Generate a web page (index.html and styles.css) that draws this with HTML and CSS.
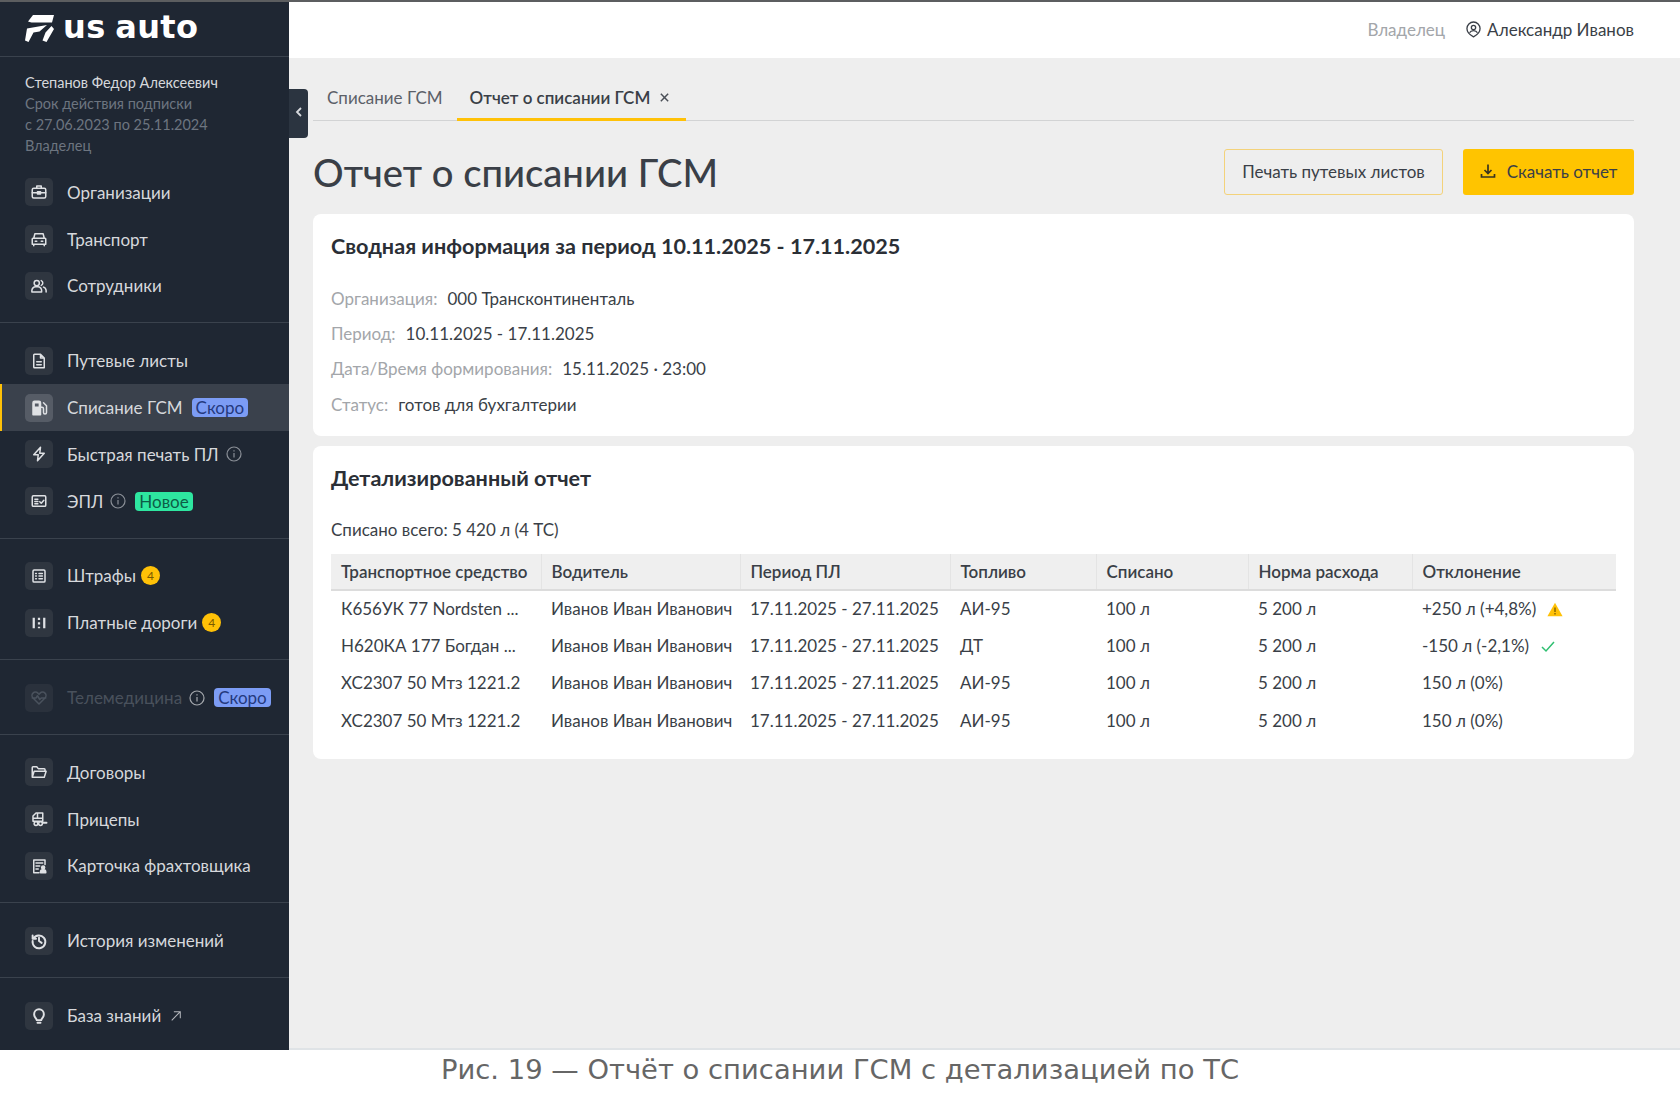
FILE: index.html
```html
<!DOCTYPE html>
<html lang="ru">
<head>
  <meta charset="UTF-8">
  <title>Отчет о списании ГСМ</title>
  <link rel="stylesheet" href="styles.css">
</head>
<body>
  <div class="app">
    <aside class="sidebar">
      <div class="logo">
        <svg class="logo-mark" viewBox="0 0 29 27"><path d="M8 0H29L27 7.500H6.500L3 6.500ZM2 13.500L22 10 14.500 16.500 8.500 17.500 3.500 27 0 25.500ZM26.500 11L29 14 21.500 27 17.500 25.500 20.500 17.500Z" fill="#fff"/></svg>
        <span class="logo-text">us auto</span>
      </div>

      <div class="user-info">
        <div class="user-name">Степанов Федор Алексеевич</div>
        <div>Срок действия подписки</div>
        <div>с 27.06.2023 по 25.11.2024</div>
        <div>Владелец</div>
      </div>

      <div class="nav-group first">
        <div class="nav-item">
          <span class="nav-icon"><svg viewBox="0 0 24 24"><rect x="3" y="7" width="18" height="13" rx="2"/><path d="M9 7V4h6v3M3 13h18"/><rect x="10" y="11.500" width="4" height="3" fill="currentColor"/></svg></span>
          <span>Организации</span>
        </div>
        <div class="nav-item">
          <span class="nav-icon"><svg viewBox="0 0 24 24"><path d="M5 11l1.500-6h11l1.500 6M3 12a1 1 0 011-1h16a1 1 0 011 1v7H3zM5 19v2M19 19v2M7 15h2M15 15h2"/></svg></span>
          <span>Транспорт</span>
        </div>
        <div class="nav-item">
          <span class="nav-icon"><svg viewBox="0 0 24 24"><circle cx="9" cy="8" r="3.500"/><path d="M2.500 20v-2a5 5 0 015-5h3a5 5 0 015 5v2zM15 4.800a3.500 3.500 0 010 6.400M18 13.500a5 5 0 013.500 4.500v2"/></svg></span>
          <span>Сотрудники</span>
        </div>
      </div>

      <div class="nav-group">
        <div class="nav-item">
          <span class="nav-icon"><svg viewBox="0 0 24 24"><path d="M6 3h8l5 5v13H6a1 1 0 01-1-1V4a1 1 0 011-1zM14 3v5h5M9 13h6M9 17h6"/></svg></span>
          <span>Путевые листы</span>
        </div>
        <div class="nav-item active">
          <span class="nav-icon"><svg viewBox="0 0 24 24"><path d="M4 21V5a2 2 0 012-2h6a2 2 0 012 2v16z" fill="currentColor"/><path d="M14 11h2a2 2 0 012 2v5a2 2 0 004 0V9l-4-4"/><rect x="6.500" y="6" width="5" height="4" fill="#565c66" stroke="none"/></svg></span>
          <span>Списание ГСМ</span>
          <span class="badge badge-blue">Скоро</span>
        </div>
        <div class="nav-item">
          <span class="nav-icon"><svg viewBox="0 0 24 24"><path d="M14 3L5 13h6l-1 8 9-10h-6z"/></svg></span>
          <span>Быстрая печать ПЛ</span>
          <svg class="info" viewBox="0 0 16 16"><circle cx="8" cy="8" r="7"/><path d="M8 7v4.500M8 4.200v1.200"/></svg>
        </div>
        <div class="nav-item">
          <span class="nav-icon"><svg viewBox="0 0 24 24"><rect x="3" y="5" width="18" height="14" rx="1.500"/><path d="M6.500 9.500h4M6.500 12.500h4M6.500 15.500h4M13 13l2 2 3.500-4"/></svg></span>
          <span>ЭПЛ</span>
          <svg class="info" viewBox="0 0 16 16"><circle cx="8" cy="8" r="7"/><path d="M8 7v4.500M8 4.200v1.200"/></svg>
          <span class="badge badge-green">Новое</span>
        </div>
      </div>

      <div class="nav-group">
        <div class="nav-item">
          <span class="nav-icon"><svg viewBox="0 0 24 24"><rect x="4" y="4" width="16" height="16" rx="1.500"/><path d="M7.500 8.500h1M7.500 12h1M7.500 15.500h1M12 8.500h4.500M12 12h4.500M12 15.500h4.500"/></svg></span>
          <span>Штрафы</span>
          <span class="count">4</span>
        </div>
        <div class="nav-item">
          <span class="nav-icon"><svg viewBox="0 0 24 24"><path class="bars" d="M5 5v14M19 5v14M12 5v3M12 11v3M12 17v2"/></svg></span>
          <span>Платные дороги</span>
          <span class="count">4</span>
        </div>
      </div>

      <div class="nav-group">
        <div class="nav-item disabled">
          <span class="nav-icon"><svg viewBox="0 0 24 24"><path d="M12 20l-8-8a4.600 4.600 0 010-6.500 4.600 4.600 0 016.500 0L12 7l1.500-1.500a4.600 4.600 0 016.500 0 4.600 4.600 0 010 6.500zM3 12h5l2-3 3 5 2-2h6"/></svg></span>
          <span>Телемедицина</span>
          <svg class="info" viewBox="0 0 16 16"><circle cx="8" cy="8" r="7"/><path d="M8 7v4.500M8 4.200v1.200"/></svg>
          <span class="badge badge-blue">Скоро</span>
        </div>
      </div>

      <div class="nav-group">
        <div class="nav-item">
          <span class="nav-icon"><svg viewBox="0 0 24 24"><path d="M3 19V6a1 1 0 011-1h5l2 2.500h8a1 1 0 011 1V11M3 19l2.500-8H21.500L19 19z"/></svg></span>
          <span>Договоры</span>
        </div>
        <div class="nav-item">
          <span class="nav-icon"><svg viewBox="0 0 24 24"><path d="M8 4h9v11H4V8zM4 11h13M10 4v7"/><circle cx="8" cy="18" r="2.500"/><circle cx="14" cy="18" r="2.500"/><path d="M17 17h5" class="thick"/></svg></span>
          <span>Прицепы</span>
        </div>
        <div class="nav-item">
          <span class="nav-icon"><svg viewBox="0 0 24 24"><path d="M20 10V4H5v17h7M8 8h9M8 12h5M8 16h3"/><circle cx="17.500" cy="14" r="2" fill="currentColor"/><path d="M14 21v-1a3 3 0 013-3h1a3 3 0 013 3v1z" fill="currentColor"/></svg></span>
          <span>Карточка фрахтовщика</span>
        </div>
      </div>

      <div class="nav-group">
        <div class="nav-item">
          <span class="nav-icon"><svg viewBox="0 0 24 24"><path class="thick" d="M4.500 9A8.500 8.500 0 113.500 12M3.500 4.500V9H8M12 7.500V12l3.500 2.500"/></svg></span>
          <span>История изменений</span>
        </div>
      </div>

      <div class="nav-group">
        <div class="nav-item">
          <span class="nav-icon"><svg viewBox="0 0 24 24"><path class="thick" d="M9 17.500c0-2-3.500-3.500-3.500-8a6.500 6.500 0 0113 0c0 4.500-3.500 6-3.500 8zM10 21h4"/></svg></span>
          <span>База знаний</span>
          <svg class="ext" viewBox="0 0 14 14"><path d="M2 12L12 2M4.500 2H12v7.500"/></svg>
        </div>
      </div>
    </aside>

    <div class="main">
      <button class="collapse" type="button"><svg viewBox="0 0 10 14"><path d="M7 3L3 7l4 4"/></svg></button>

      <header class="topbar">
        <span class="role">Владелец</span>
        <svg class="user-icon" viewBox="0 0 16 18"><path d="M8 16.800C4 14.800 1 12 1 8a7 7 0 0114 0c0 4-3 6.800-7 8.800z"/><circle cx="8" cy="6.800" r="2.300"/><path d="M3.800 12.500c.8-1.600 2.400-2.300 4.200-2.300s3.400.7 4.200 2.300"/></svg>
        <span class="user">Александр Иванов</span>
      </header>

      <div class="content">
        <div class="tabs">
          <div class="tab">Списание ГСМ</div>
          <div class="tab active">Отчет о списании ГСМ<svg class="tab-close" viewBox="0 0 12 12"><path d="M2 2l8 8M10 2l-8 8"/></svg></div>
        </div>

        <div class="page-head">
          <h1 class="page-title">Отчет о списании ГСМ</h1>
          <div class="actions">
            <button class="button button-outline" type="button">Печать путевых листов</button>
            <button class="button button-primary" type="button">
              <svg viewBox="0 0 16 16"><path d="M8 1.500v8.500M4.500 7L8 10.500 11.500 7M1.500 11v3h13v-3"/></svg>
              Скачать отчет
            </button>
          </div>
        </div>

        <section class="card summary">
          <h2 class="card-title">Сводная информация за период 10.11.2025 - 17.11.2025</h2>
          <div class="info-rows">
            <div class="info-row"><span class="info-label">Организация:</span><span>000 Трансконтиненталь</span></div>
            <div class="info-row"><span class="info-label">Период:</span><span>10.11.2025 - 17.11.2025</span></div>
            <div class="info-row"><span class="info-label">Дата/Время формирования:</span><span>15.11.2025 · 23:00</span></div>
            <div class="info-row"><span class="info-label">Статус:</span><span>готов для бухгалтерии</span></div>
          </div>
        </section>

        <section class="card detail">
          <h2 class="card-title">Детализированный отчет</h2>
          <div class="total">Списано всего: 5 420 л (4 ТС)</div>
          <table class="report">
            <colgroup>
              <col class="col-vehicle"><col class="col-driver"><col class="col-period"><col class="col-fuel"><col class="col-spent"><col class="col-norm"><col class="col-diff">
            </colgroup>
            <thead>
              <tr><th>Транспортное средство</th><th>Водитель</th><th>Период ПЛ</th><th>Топливо</th><th>Списано</th><th>Норма расхода</th><th>Отклонение</th></tr>
            </thead>
            <tbody>
              <tr>
                <td>К656УК 77 Nordsten ...</td><td>Иванов Иван Иванович</td><td>17.11.2025 - 27.11.2025</td><td>АИ-95</td><td>100 л</td><td>5 200 л</td>
                <td>+250 л (+4,8%)<svg class="mark" viewBox="0 0 16 15"><path d="M8 .8L15.600 14.200H.4z" fill="#ffc107"/><path d="M8 5.500v4.500M8 11v1.500" stroke="#7a5a00" stroke-width="1.300" fill="none"/></svg></td>
              </tr>
              <tr>
                <td>Н620КА 177 Богдан ...</td><td>Иванов Иван Иванович</td><td>17.11.2025 - 27.11.2025</td><td>ДТ</td><td>100 л</td><td>5 200 л</td>
                <td>-150 л (-2,1%)<svg class="mark" viewBox="0 0 16 15"><path d="M2 8l4 4 8-9" stroke="#2fbf71" stroke-width="1.500" fill="none"/></svg></td>
              </tr>
              <tr>
                <td>ХС2307 50 Мтз 1221.2</td><td>Иванов Иван Иванович</td><td>17.11.2025 - 27.11.2025</td><td>АИ-95</td><td>100 л</td><td>5 200 л</td><td>150 л (0%)</td>
              </tr>
              <tr>
                <td>ХС2307 50 Мтз 1221.2</td><td>Иванов Иван Иванович</td><td>17.11.2025 - 27.11.2025</td><td>АИ-95</td><td>100 л</td><td>5 200 л</td><td>150 л (0%)</td>
              </tr>
            </tbody>
          </table>
        </section>
      </div>
    </div>
  </div>

  <div class="caption">Рис. 19 — Отчёт о списании ГСМ с детализацией по ТС</div>
</body>
</html>
```

FILE: styles.css
```css
:root {
  --side-bg: #1f2733;
  --side-line: #3a424d;
  --side-text: #d6d8dc;
  --side-muted: #6d7580;
  --tile: #2f3640;
  --yellow: #ffc107;
  --bg: #eeeeee;
  --text: #3a3f47;
  --muted: #a3a6aa;
}

* {
  box-sizing: border-box;
}

body {
  margin: 0;
  background-color: #fff;
  font-family: Lato, "Noto Sans", sans-serif;
  font-size: 17px;
  color: var(--text);
}

.app {
  display: flex;
  height: 1050px;
  border-top: 2px solid #5c5e60;
}

/* sidebar */
.sidebar {
  width: 289px;
  flex-shrink: 0;
  background-color: var(--side-bg);
  color: var(--side-text);
}

.logo {
  display: flex;
  align-items: center;
  gap: 9px;
  height: 55px;
  padding-left: 25px;
  border-bottom: 1px solid var(--side-line);
}

.logo-mark {
  width: 29px;
  height: 27px;
  margin-top: -1px;
}

.logo-text {
  font-family: "DejaVu Sans", sans-serif;
  font-weight: 700;
  font-size: 32px;
  line-height: 1;
  letter-spacing: 0.4px;
  word-spacing: -2px;
  color: #fff;
  margin-top: -5px;
}

.user-info {
  padding: 15px 25px 13px;
  font-size: 14.5px;
  line-height: 21px;
  color: var(--side-muted);
}

.user-name {
  color: var(--side-text);
}

.nav-group {
  padding: 14px 0 13px;
  border-top: 1px solid var(--side-line);
}

.nav-group.first {
  padding-top: 0;
  border-top: none;
}

.nav-item {
  display: flex;
  align-items: center;
  height: 46.8px;
  padding-left: 25px;
  white-space: nowrap;
}

.nav-item > span:nth-child(2) {
  margin-left: 14px;
}

.nav-item.active {
  background-color: #3a414c;
  box-shadow: inset 2px 0 0 var(--yellow);
}

.nav-item.active .nav-icon {
  background-color: #565c66;
}

.nav-item.disabled {
  color: #49515c;
}

.nav-icon {
  display: flex;
  align-items: center;
  justify-content: center;
  width: 28px;
  height: 28px;
  flex-shrink: 0;
  border-radius: 5px;
  background-color: var(--tile);
  color: #dfe1e4;
}

.nav-item.disabled .nav-icon {
  background-color: #2a313c;
  color: #4a525d;
}

.nav-icon svg {
  width: 18px;
  height: 18px;
  fill: none;
  stroke: currentColor;
  stroke-width: 2;
  stroke-linejoin: round;
  stroke-linecap: round;
}

.nav-icon svg .thick {
  stroke-width: 2.6;
}

.nav-icon svg .bars {
  stroke-width: 3;
  stroke-linecap: butt;
}

.info {
  width: 16px;
  height: 16px;
  margin-left: 7px;
  fill: none;
  stroke: #8b9098;
  stroke-width: 1.2;
}

.nav-item.disabled .info {
  stroke: #a5a9ae;
}

.ext {
  width: 12px;
  height: 12px;
  margin-left: 9px;
  fill: none;
  stroke: #b5b8bd;
  stroke-width: 1.2;
}

.badge {
  margin-left: 9px;
  padding: 0 4px;
  height: 19px;
  line-height: 19px;
  border-radius: 4px;
  font-size: 17px;
}

.badge-blue {
  background-color: #7c9cf5;
  color: #24397e;
}

.badge-green {
  background-color: #2ee6a0;
  color: #0d5c47;
}

.count {
  display: flex;
  align-items: center;
  justify-content: center;
  width: 19px;
  height: 19px;
  margin-left: 5px;
  border-radius: 50%;
  background-color: var(--yellow);
  color: #7a5a00;
  font-size: 12px;
}

/* main area */
.main {
  position: relative;
  flex: 1;
  min-width: 0;
  background-color: var(--bg);
  border-bottom: 2px solid #dfe3e6;
}

.collapse {
  position: absolute;
  left: 0;
  top: 87px;
  width: 19px;
  height: 49px;
  padding: 0;
  border: none;
  border-radius: 0 4px 4px 0;
  background-color: #2b3440;
}

.collapse svg {
  width: 10px;
  height: 14px;
  fill: none;
  stroke: #d6d8dc;
  stroke-width: 1.8;
}

.topbar {
  display: flex;
  align-items: center;
  justify-content: flex-end;
  height: 56px;
  padding: 0 46px 2px 0;
  background-color: #fff;
}

.role {
  color: var(--muted);
  margin-right: 21px;
}

.user-icon {
  width: 15px;
  height: 17px;
  margin-right: 6px;
  fill: none;
  stroke: var(--text);
  stroke-width: 1.4;
}

.content {
  padding: 0 46px 0 24px;
}

.tabs {
  display: flex;
  align-items: flex-end;
  height: 63px;
  border-bottom: 1px solid #d2d3d4;
}

.tab {
  display: flex;
  align-items: center;
  height: 36px;
  margin-bottom: -1px;
  padding: 0 14px 11px;
  color: #5b6068;
  white-space: nowrap;
}

.tab.active {
  padding: 0 16px 8px 13px;
  border-bottom: 3px solid var(--yellow);
  color: var(--text);
  font-weight: 600;
}

.tab-close {
  width: 11px;
  height: 11px;
  margin-left: 9px;
  fill: none;
  stroke: #4a4f57;
  stroke-width: 1.6;
}

.page-head {
  display: flex;
  align-items: center;
  justify-content: space-between;
  margin: 28px 0 19px;
}

.page-title {
  margin: 0;
  font-size: 38.2px;
  font-weight: 500;
  line-height: 46px;
  color: var(--text);
}

.actions {
  display: flex;
  gap: 20px;
}

.button {
  display: flex;
  align-items: center;
  justify-content: center;
  height: 46px;
  padding: 0 0 2px;
  border-radius: 3px;
  font-family: inherit;
  font-size: 17px;
  color: var(--text);
}

.button-outline {
  width: 219px;
  background-color: transparent;
  border: 1px solid #f3d27a;
}

.button-primary {
  gap: 11px;
  width: 171px;
  background-color: #ffc400;
  border: none;
}

.button-primary svg {
  width: 16px;
  height: 16px;
  fill: none;
  stroke: #3a3420;
  stroke-width: 1.7;
}

.card {
  padding: 20px 18px;
  background-color: #fff;
  border-radius: 8px;
}

.card-title {
  margin: 0;
  font-size: 21.6px;
  font-weight: 700;
  line-height: 24px;
  color: #2b2f36;
}

.summary {
  height: 222px;
  margin-bottom: 10px;
}

.info-rows {
  margin-top: 23px;
}

.info-row {
  display: flex;
  align-items: center;
  gap: 10px;
  height: 35.2px;
}

.info-label {
  color: var(--muted);
}

.detail {
  height: 313px;
}

.total {
  margin-top: 29px;
  line-height: 22px;
  margin-bottom: 13px;
}

.report {
  width: 100%;
  table-layout: fixed;
  border-collapse: collapse;
}

.col-vehicle { width: 210px; }
.col-driver { width: 199px; }
.col-period { width: 210px; }
.col-fuel { width: 146px; }
.col-spent { width: 152px; }
.col-norm { width: 164px; }

.report th {
  height: 36px;
  padding: 0 10px;
  background-color: #efefef;
  border-bottom: 2px solid #dcdcdc;
  border-left: 1px solid #e4e4e4;
  text-align: left;
  font-weight: 600;
  color: var(--text);
}

.report th:first-child {
  border-left: none;
}

.report td {
  height: 37.4px;
  padding: 0 10px 1px;
  white-space: nowrap;
  overflow: hidden;
}

.mark {
  width: 16px;
  height: 15px;
  margin-left: 11px;
  vertical-align: -2px;
}

.caption {
  height: 44px;
  font-family: "DejaVu Sans", sans-serif;
  font-size: 27.4px;
  line-height: 40px;
  text-align: center;
  color: #666;
}
```
